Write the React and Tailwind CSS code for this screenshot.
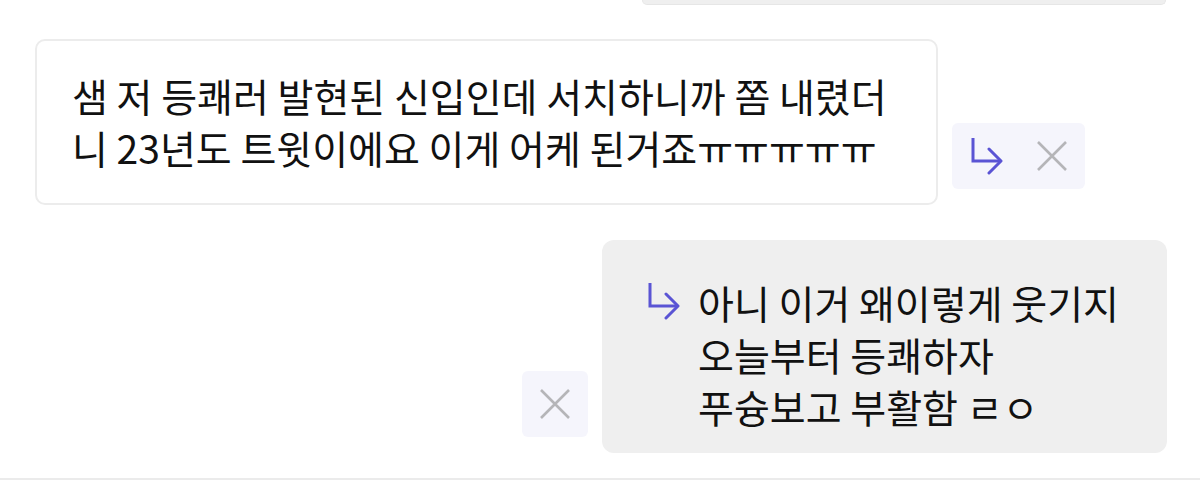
const ReplyArrow = ({ className = "" }) => (
  <svg
    viewBox="0 0 34 38"
    width="34"
    height="38"
    fill="none"
    stroke="#5a54d4"
    strokeWidth="3"
    className={className}
  >
    <path d="M3 1 V24 H31" strokeLinejoin="miter" />
    <path d="M19 12 L31 24 L19 36" strokeLinecap="round" strokeLinejoin="round" />
  </svg>
);

const CloseIcon = () => (
  <svg viewBox="0 0 32 32" width="32" height="32" fill="none" stroke="#b5b5b8" strokeWidth="2.6">
    <path d="M2 2 L30 30 M30 2 L2 30" />
  </svg>
);

const App = () => {
  return (
    <div className="w-[1200px] h-[487px] bg-white overflow-hidden flex flex-col font-['Noto_Sans_CJK_KR',sans-serif] text-[#111111]">
      {/* previous message, cut off at the top */}
      <div className="flex justify-end pr-[34px]">
        <div className="w-[524px] h-[5px] bg-[#efefef] rounded-b-[10px] border-b border-x border-[#e6e6e6]" />
      </div>

      {/* received message */}
      <div className="mt-[34px] flex items-end gap-[14px] pl-[35px]">
        <div className="w-[903px] h-[166px] border-2 border-[#ececec] rounded-[10px] pl-[35px] pt-[28px] text-[39px] leading-[52px]">
          샘 저 등쾌러 발현된 신입인데 서치하니까 쫌 내렸더
          <br />니 23년도 트윗이에요 이게 어케 된거죠ㅠㅠㅠㅠㅠ
        </div>
        <div className="flex mb-[16px] rounded-[6px] bg-[#f5f5fc]">
          <button className="w-[66px] h-[66px] flex items-center justify-center">
            <ReplyArrow className="ml-[3px]" />
          </button>
          <button className="w-[67px] h-[66px] flex items-center justify-center">
            <CloseIcon />
          </button>
        </div>
      </div>

      {/* sent reply */}
      <div className="mt-[35px] flex justify-end items-end gap-[14px] pr-[33px]">
        <button className="w-[66px] h-[66px] mb-[16px] rounded-[6px] bg-[#f5f5fc] flex items-center justify-center">
          <CloseIcon />
        </button>
        <div className="w-[565px] h-[213px] bg-[#efefef] rounded-[12px] flex pl-[45px] pt-[36px] text-[39px] leading-[52px]">
          <ReplyArrow className="mt-[6px] mr-[17px] shrink-0" />
          <div>
            아니 이거 왜이렇게 웃기지
            <br />오늘부터 등쾌하자
            <br />푸슝보고 부활함 ㄹㅇ
          </div>
        </div>
      </div>

      <div className="mt-[25px] border-t-2 border-[#ebebeb] flex-1" />
    </div>
  );
};

export default App;
